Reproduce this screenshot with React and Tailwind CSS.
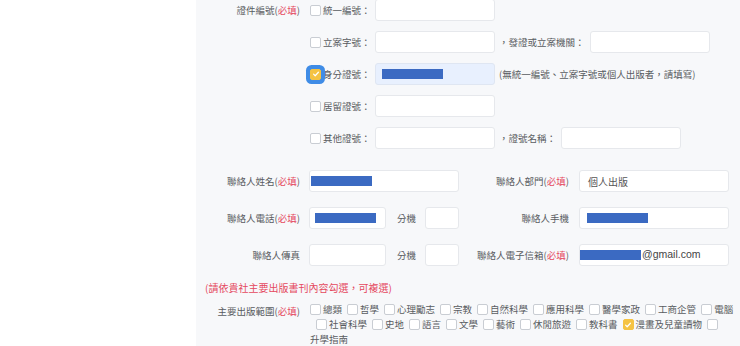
import React from "react";

const font = { fontFamily: '"Noto Sans CJK TC", "Noto Sans", sans-serif' };

const Box = ({ checked, focus }) => (
  <span
    className={`relative inline-flex shrink-0 items-center justify-center w-[11px] h-[11px] rounded-[2px] border ${
      checked ? "bg-[#f5c343] border-[#f5c343]" : "bg-white border-[#c9cdd3]"
    } ${focus ? "ring-4 ring-[#3f8ce6]" : ""}`}
  >
    {checked && (
      <svg viewBox="0 0 10 10" className="w-[8px] h-[8px]">
        <path d="M2 5.2l2 2 4-4.4" fill="none" stroke="#fff" strokeWidth="1.5" strokeLinecap="round" strokeLinejoin="round" />
      </svg>
    )}
  </span>
);

const Input = ({ w, auto, children }) => (
  <div
    className={`h-[22px] shrink-0 rounded-[3px] border flex items-center ${w} ${
      auto ? "bg-[#e8f0fe] border-[#dfe6f2]" : "bg-white border-[#e6e8ec]"
    }`}
  >
    {children}
  </div>
);

const Bar = ({ className }) => <span className={`block h-[10px] w-[61px] bg-[#3b6ac2] ${className}`} />;

const Req = ({ text }) => (
  <span>
    {text}(<span className="text-[#e5485e]">必填</span>)
  </span>
);

const idRows = [
  { label: "統一編號：" },
  { label: "立案字號：", extra: "，發證或立案機關：", extraInput: true },
  { label: "身分證號：", checked: true, note: "(無統一編號、立案字號或個人出版者，請填寫)" },
  { label: "居留證號：" },
  { label: "其他證號：", extra: "，證號名稱：", extraInput: true },
];

const line1 = ["總類", "哲學", "心理勵志", "宗教", "自然科學", "應用科學", "醫學家政", "工商企管", "電腦"];
const line2 = ["社會科學", "史地", "語言", "文學", "藝術", "休閒旅遊", "教科書", "漫畫及兒童讀物"];

const Item = ({ text, checked }) => (
  <span className="inline-flex items-center mr-[5px]">
    <Box checked={checked} />
    <span className="ml-[2px]">{text}</span>
  </span>
);

export default function App() {
  return (
    <div lang="zh-Hant-TW" className="w-[740px] h-[346px] overflow-hidden flex bg-white text-[#595c61]" style={font}>
      <div className="w-[196px] shrink-0 bg-white" />
      <div className="flex-1 bg-[#f7f8fa] flex flex-col">
        {/* 證件編號 */}
        <div className="-mt-[1px] flex flex-col gap-[10px] text-[9.5px]">
          {idRows.map((r, i) => (
            <div key={i} className="flex items-center h-[22px]">
              <div className="w-[104px] shrink-0 text-right">{i === 0 && <Req text="證件編號" />}</div>
              <div className="ml-[10px] flex items-center">
                <Box checked={r.checked} focus={r.checked} />
                <span className="ml-[2px] w-[52px]">{r.label}</span>
                <Input w="w-[120px]" auto={r.checked}>
                  {r.checked && <Bar className="ml-[6px] w-[60px]" />}
                </Input>
                {r.extra && <span className="ml-[4px] mr-[5px]">{r.extra}</span>}
                {r.extraInput && <Input w="w-[120px]" />}
                {r.note && <span className="ml-[4px]">{r.note}</span>}
              </div>
            </div>
          ))}
        </div>

        {/* 聯絡人 */}
        <div className="mt-[21px] flex flex-col gap-[15px] text-[9.5px]">
          <div className="flex items-center h-[22px]">
            <div className="w-[104px] shrink-0 text-right"><Req text="聯絡人姓名" /></div>
            <div className="ml-[9px]"><Input w="w-[150px]"><Bar className="ml-[1px]" /></Input></div>
            <div className="w-[110px] shrink-0 text-right"><Req text="聯絡人部門" /></div>
            <div className="ml-[10px]"><Input w="w-[150px]"><span className="ml-[8px] text-[10px] text-[#555]">個人出版</span></Input></div>
          </div>
          <div className="flex items-center h-[22px]">
            <div className="w-[104px] shrink-0 text-right"><Req text="聯絡人電話" /></div>
            <div className="ml-[9px] flex items-center">
              <Input w="w-[77px]"><Bar className="ml-[5px] w-[60px]" /></Input>
              <span className="ml-[11px] w-[28px]">分機</span>
              <Input w="w-[34px]" />
            </div>
            <div className="w-[110px] shrink-0 text-right">聯絡人手機</div>
            <div className="ml-[10px]"><Input w="w-[150px]"><Bar className="ml-[7px] w-[60px]" /></Input></div>
          </div>
          <div className="flex items-center h-[22px]">
            <div className="w-[104px] shrink-0 text-right">聯絡人傳真</div>
            <div className="ml-[9px] flex items-center">
              <Input w="w-[77px]" />
              <span className="ml-[11px] w-[28px]">分機</span>
              <Input w="w-[34px]" />
            </div>
            <div className="w-[110px] shrink-0 text-right"><Req text="聯絡人電子信箱" /></div>
            <div className="ml-[10px]">
              <Input w="w-[150px]">
                <Bar className="w-[60px]" />
                <span className="ml-[1px] text-[10.5px] text-[#444]" style={{ fontFamily: '"Liberation Sans", Arial, sans-serif' }}>@gmail.com</span>
              </Input>
            </div>
          </div>
        </div>

        {/* 出版範圍 */}
        <div className="mt-[15px] ml-[9px] text-[10px] text-[#e5485e] leading-[14px]">(請依貴社主要出版書刊內容勾選，可複選)</div>
        <div className="mt-[7px] flex text-[9.5px]">
          <div className="w-[104px] shrink-0 text-right leading-[15px] pt-[2px]"><Req text="主要出版範圍" /></div>
          <div className="ml-[10px] flex flex-col text-[9.5px] leading-[15px] whitespace-nowrap">
            <div className="flex items-center h-[15px]">
              {line1.map((t) => <Item key={t} text={t} />)}
            </div>
            <div className="flex items-center h-[15px] pl-[6px]">
              {line2.map((t) => <Item key={t} text={t} checked={t === "漫畫及兒童讀物"} />)}
              <Box />
            </div>
            <div className="h-[15px]">升學指南</div>
          </div>
        </div>
      </div>
    </div>
  );
}
